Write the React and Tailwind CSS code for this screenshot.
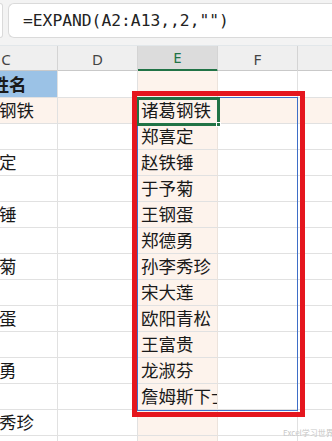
import React from "react";

const cjk = { fontFamily: '"Noto Sans CJK SC", "Noto Sans", sans-serif' };

const colC = ["姓名", "诸葛钢铁", "", "郑喜定", "", "赵铁锤", "", "于予菊", "", "王钢蛋", "", "郑德勇", "", "孙李秀珍", ""];
const colE = ["", "诸葛钢铁", "郑喜定", "赵铁锤", "于予菊", "王钢蛋", "郑德勇", "孙李秀珍", "宋大莲", "欧阳青松", "王富贵", "龙淑芬", "詹姆斯下士", "", ""];

export default function App() {
  return (
    <div className="relative w-[332px] h-[441px] overflow-hidden bg-white">
      {/* formula bar */}
      <div className="h-[46px] bg-[#f3f3f3] border-b border-[#e2e7ea] flex items-start pt-[3px] gap-[5px]">
        <div className="w-[3px] h-[35px] bg-white rounded-r-md border border-l-0 border-[#dadada]" />
        <div className="flex-1 h-[35px] bg-white rounded-l-md border border-r-0 border-[#dadada] flex items-center pl-[14px] pt-[1px]">
          <span className="text-[16.3px] text-[#222] whitespace-pre" style={{ fontFamily: '"DejaVu Sans Mono", monospace' }}>
            =EXPAND(A2:A13,,2,"")
          </span>
        </div>
      </div>

      {/* column headers */}
      <div
        className="grid grid-cols-[97px_80px_80px_80px_1fr] ml-[-39px] w-[371px] h-[25px] bg-[#efefef] border-b border-[#c9c9c9] text-[15px] text-[#444]"
        style={{ fontFamily: '"Noto Sans", sans-serif' }}
      >
        <div className="border-r border-[#d4d4d4] flex items-center justify-center pr-[6px]">C</div>
        <div className="border-r border-[#d4d4d4] flex items-center justify-center">D</div>
        <div className="border-r border-[#d4d4d4] border-b-[3px] border-b-[#217346] bg-[#dcdcdc] text-[#217346] flex items-center justify-center">E</div>
        <div className="border-r border-[#d4d4d4] flex items-center justify-center">F</div>
        <div />
      </div>

      {/* rows */}
      <div className="ml-[-39px] w-[371px] text-[17.5px] text-[#1a1a1a]" style={cjk}>
        {colC.map((c, i) => {
          const rowPeach = i === 1;
          const h = i === 0 ? "h-[27px]" : "h-[26px]";
          const base = "border-r border-b border-[#e1e1e1] flex items-center px-[3px] whitespace-nowrap overflow-hidden";
          return (
            <div key={i} className={`grid grid-cols-[97px_80px_80px_80px_1fr] ${h}`}>
              <div
                className={`${base} ${i === 0 ? "bg-[#9bc2e6] justify-center font-bold" : rowPeach ? "bg-[#fdf3ec]" : ""}`}
              >
                {c}
              </div>
              <div className={`${base} ${rowPeach ? "bg-[#fdf3ec]" : ""}`} />
              <div className={`${base} bg-[#fdf3ec] border-r-[#ece3dc]`}>{colE[i]}</div>
              <div className={`${base} ${rowPeach ? "bg-[#fdf3ec]" : ""}`} />
              <div className={`border-b border-[#e1e1e1] ${rowPeach ? "bg-[#fdf3ec]" : ""}`} />
            </div>
          );
        })}
      </div>

      {/* spill range (blue) */}
      <div className="absolute left-[137px] top-[97px] w-[161px] h-[314px] border border-[#3f6fc8] pointer-events-none" />
      {/* active cell */}
      <div className="absolute left-[136px] top-[97px] w-[84px] h-[29px] border-[3px] border-[#217346] pointer-events-none" />
      <div className="absolute left-[216px] top-[122px] w-[5px] h-[5px] bg-[#217346] border border-white" />
      {/* red annotation */}
      <div className="absolute left-[132px] top-[91px] w-[173px] h-[326px] border-[5px] border-[#e5161e] pointer-events-none" />

      {/* watermark */}
      <div
        className="absolute left-[283px] top-[427px] text-[8px] text-[#c8c8c8] whitespace-nowrap"
        style={cjk}
      >
        Excel学习世界
      </div>
    </div>
  );
}
